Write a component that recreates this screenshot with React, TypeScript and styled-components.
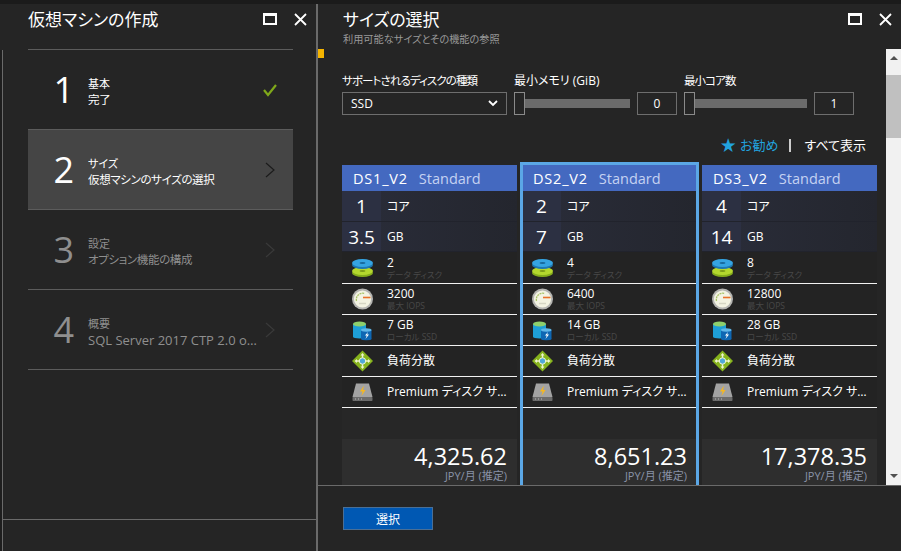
import React from "react";
import styled, { createGlobalStyle } from "styled-components";

const Global = createGlobalStyle`
  html, body { margin: 0; padding: 0; background: #252525; }
  body {
    font-family: "Open Sans", "Noto Sans CJK JP", sans-serif;
    font-feature-settings: "palt";
    color: #fff;
  }
  * { box-sizing: border-box; }
`;

const Page = styled.div`
  width: 901px;
  height: 551px;
  display: flex;
  flex-direction: column;
  overflow: hidden;
  background: #252525;
`;
const TopEdge = styled.div`
  height: 4px;
  flex: none;
  background: #1b1b1b;
`;
const Columns = styled.div`
  flex: 1;
  display: flex;
  min-height: 0;
`;
const LeftEdge = styled.div`
  width: 3px;
  flex: none;
  background: #1e1e1e;
  border-right: 1px solid #6a6a6a;
  margin-top: 46px;
`;
const Wizard = styled.section`
  width: 315px;
  flex: none;
  display: flex;
  flex-direction: column;
  border-right: 2px solid #6a6a6a;
`;
const WizardHead = styled.header`
  height: 45px;
  flex: none;
  padding: 3px 9px 0 25px;
  display: flex;
  justify-content: space-between;
  align-items: flex-start;
`;
const Title = styled.h1`
  margin: 0;
  font-size: 17px;
  line-height: 26px;
  font-weight: 400;
`;
const Controls = styled.div`
  display: flex;
  align-items: center;
  gap: 17px;
  height: 26px;
  margin-top: -1px;
`;
const MaxIcon = styled.span`
  width: 14px;
  height: 12px;
  border: 2px solid #fff;
  border-top-width: 3px;
`;
const StepList = styled.ol`
  list-style: none;
  margin: 0 23px 0 25px;
  padding: 0;
  flex: 1;
  border-top: 1px solid #5c5c5c;
`;
const Step = styled.li<{ $active?: boolean; $muted?: boolean }>`
  height: 80px;
  display: flex;
  align-items: center;
  padding: 0 12px 0 0;
  background: ${(p) => (p.$active ? "#454545" : "transparent")};
  border-bottom: 1px solid #5c5c5c;
  color: ${(p) => (p.$muted ? "#8f8f8f" : "#fff")};
`;
const StepNo = styled.span`
  width: 60px;
  flex: none;
  text-align: right;
  padding-right: 14px;
  font-size: 36px;
  line-height: 44px;
  font-weight: 400;
`;
const StepText = styled.div`
  flex: 1;
  min-width: 0;
  padding-top: 3px;
`;
const StepLabel = styled.div`
  font-size: 11px;
  line-height: 17px;
`;
const StepValue = styled.div<{ $latin?: boolean }>`
  font-size: ${(p) => (p.$latin ? "13px" : "11.5px")};
  letter-spacing: ${(p) => (p.$latin ? "0" : "-0.35px")};
  line-height: 16px;
  white-space: nowrap;
  overflow: hidden;
  text-overflow: ellipsis;
  width: 171px;
`;
const WizardFoot = styled.div`
  height: 32px;
  flex: none;
  border-top: 1px solid #6a6a6a;
`;
const StepMark = styled.svg`
  width: 16px;
  height: 16px;
  flex: none;
  margin-right: 3px;
`;
const Sizes = styled.section`
  flex: 1;
  min-width: 0;
  display: flex;
  flex-direction: column;
`;
const SizesHead = styled.header`
  height: 45px;
  flex: none;
  padding: 3px 9px 0 25px;
  display: flex;
  justify-content: space-between;
  align-items: flex-start;
  position: relative;
`;
const Subtitle = styled.div`
  font-size: 10.2px;
  line-height: 13px;
  color: #999;
`;
const Marker = styled.span`
  position: absolute;
  left: 0;
  top: 45px;
  width: 6px;
  height: 9px;
  background: #f5b400;
`;
const BodyRow = styled.div`
  height: 436px;
  flex: none;
  display: flex;
`;
const Scroller = styled.div`
  flex: 1;
  min-width: 0;
  padding: 23px 9px 0 24px;
  overflow: hidden;
`;
const Filters = styled.div`
  display: flex;
  gap: 7px;
  height: 42px;
`;
const Filter = styled.div<{ $w: number }>`
  width: ${(p) => p.$w}px;
  flex: none;
`;
const FilterLabel = styled.div<{ $tight?: boolean }>`
  font-size: ${(p) => (p.$tight ? "11.5px" : "12px")};
  letter-spacing: ${(p) => (p.$tight ? "-0.9px" : "0")};
  line-height: 18px;
  height: 20px;
  white-space: nowrap;
`;
const SelectBox = styled.div`
  height: 23px;
  border: 1px solid #6e6e6e;
  padding: 0 8px;
  display: flex;
  align-items: center;
  justify-content: space-between;
  font-size: 12px;
`;
const SliderRow = styled.div`
  display: flex;
  align-items: center;
  height: 23px;
`;
const Thumb = styled.span`
  width: 11px;
  height: 23px;
  flex: none;
  border: 1px solid #8a8a8a;
  background: #252525;
`;
const Track = styled.span`
  flex: 1;
  height: 9px;
  background: #6b6b6b;
`;
const NumberBox = styled.span`
  width: 40px;
  height: 23px;
  flex: none;
  margin-left: 7px;
  border: 1px solid #6e6e6e;
  display: flex;
  align-items: center;
  justify-content: center;
  font-size: 12px;
`;
const ViewLinks = styled.div`
  height: 48px;
  padding: 14px 11px 0 0;
  display: flex;
  justify-content: flex-end;
  align-items: center;
  font-size: 13px;
  line-height: 20px;
`;
const Recommend = styled.span`
  color: #22a3df;
  display: flex;
  align-items: center;
  gap: 4px;
`;
const Star = styled.span`
  font-size: 15.5px;
  line-height: 20px;
`;
const Divider = styled.span`
  width: 2px;
  height: 13px;
  background: #ccc;
  margin: 0 13px 0 11px;
`;
const Cards = styled.div`
  display: flex;
  gap: 5px;
  margin-top: 3px;
`;
const Card = styled.article`
  width: 175px;
  height: 320px;
  flex: none;
  position: relative;
  background: #232323;
  display: flex;
  flex-direction: column;
`;
const SelectedFrame = styled.span`
  position: absolute;
  left: -2px;
  right: -2px;
  top: -3px;
  bottom: 0;
  border: 3px solid #5ba7e6;
  border-bottom: none;
  pointer-events: none;
`;
const CardHead = styled.div`
  height: 26px;
  flex: none;
  background: #4469c0;
  padding-left: 11px;
  display: flex;
  align-items: center;
  gap: 11px;
  font-size: 14.5px;
`;
const SizeName = styled.span`
  letter-spacing: 0.8px;
`;
const Tier = styled.span`
  color: #c4d2f2;
`;
const SpecRow = styled.div<{ $h: number }>`
  height: ${(p) => p.$h}px;
  flex: none;
  display: flex;
  align-items: center;
  background: linear-gradient(90deg, #2a2d3a, #24262e);
  border-bottom: 1px solid #21232c;
  font-size: 12px;
`;
const SpecValue = styled.span`
  width: 39px;
  height: 100%;
  flex: none;
  background: #2c3042;
  display: flex;
  align-items: center;
  justify-content: center;
  font-size: 19px;
  margin-right: 6px;
`;
const Feature = styled.div<{ $h: number }>`
  height: ${(p) => p.$h}px;
  flex: none;
  display: flex;
  align-items: center;
  border-bottom: 1px solid #f2f2f2;
`;
const FeatureIcon = styled.svg`
  width: 22px;
  height: 22px;
  flex: none;
  margin: 0 13px 0 10px;
`;
const FeatureText = styled.div`
  flex: 1;
  min-width: 0;
  padding-right: 3px;
`;
const FeatureTitle = styled.div`
  font-size: 12px;
  line-height: 14px;
  white-space: nowrap;
  overflow: hidden;
  text-overflow: ellipsis;
`;
const FeatureSub = styled.div`
  font-size: 8.5px;
  line-height: 10px;
  color: #484848;
  white-space: nowrap;
`;
const Spacer = styled.div`
  height: 31px;
  flex: none;
  background: #272727;
`;
const PriceBox = styled.div`
  flex: 1;
  background: #2e2e2e;
  text-align: right;
  padding: 3px 10px 0 0;
`;
const Price = styled.div`
  font-size: 23.5px;
  line-height: 28px;
`;
const PriceUnit = styled.div`
  font-size: 11px;
  line-height: 11px;
  color: #8a93a8;
`;
const ScrollTrack = styled.div`
  width: 15px;
  flex: none;
  background: #f1f1f1;
  display: flex;
  flex-direction: column;
  align-items: center;
`;
const ScrollThumb = styled.div`
  width: 100%;
  height: 63px;
  background: #c0c0c0;
  margin-top: 15px;
`;
const ArrowUp = styled.span`
  margin-top: 7px;
  width: 0;
  height: 0;
  border-left: 4px solid transparent;
  border-right: 4px solid transparent;
  border-bottom: 4px solid #505050;
`;
const ArrowDown = styled.span`
  margin-top: auto;
  margin-bottom: 7px;
  width: 0;
  height: 0;
  border-left: 4px solid transparent;
  border-right: 4px solid transparent;
  border-top: 4px solid #505050;
`;
const Footer = styled.footer`
  flex: 1;
  border-top: 1px solid #6a6a6a;
  padding: 21px 0 0 25px;
`;
const SelectButton = styled.button`
  width: 90px;
  height: 23px;
  display: block;
  background: #0058b3;
  border: 1px solid #4a6f96;
  color: #fff;
  font: inherit;
  font-size: 12px;
  padding: 0;
`;

const Close = () => (
  <svg width="13" height="13" viewBox="0 0 13 13">
    <path d="M1 1l11 11M12 1L1 12" stroke="#fff" strokeWidth="1.8" fill="none" />
  </svg>
);
const Chevron = ({ color }: { color: string }) => (
  <StepMark viewBox="0 0 16 16">
    <path d="M4 1l8 7-8 7" stroke={color} strokeWidth="1.2" fill="none" />
  </StepMark>
);

const DiskIcon = () => (
  <FeatureIcon viewBox="0 0 22 22">
    <ellipse cx="10.5" cy="16" rx="10.5" ry="4" fill="#86ad1b" />
    <ellipse cx="10.5" cy="14" rx="10.5" ry="4" fill="#b4d82e" />
    <ellipse cx="10.5" cy="14" rx="3" ry="1.1" fill="#7c9c18" />
    <ellipse cx="10.5" cy="8" rx="10.5" ry="4" fill="#1c78b4" />
    <ellipse cx="10.5" cy="6" rx="10.5" ry="4" fill="#35a4e2" />
    <ellipse cx="10.5" cy="6" rx="3" ry="1.1" fill="#17689c" />
  </FeatureIcon>
);
const GaugeIcon = () => (
  <FeatureIcon viewBox="0 0 22 22">
    <circle cx="10.5" cy="11" r="10.5" fill="#b5b5b2" />
    <circle cx="10.5" cy="11" r="8.6" fill="#f3f3e2" />
    <path d="M4.5 13a6.3 6.3 0 0 1 8-7.5" stroke="#a9c468" strokeWidth="1.3" strokeDasharray="2 0.7" fill="none" />
    <path d="M11 9.5h7.5" stroke="#e8722a" strokeWidth="1.6" />
    <path d="M7 15.5h7" stroke="#d6d6c4" strokeWidth="1.5" />
  </FeatureIcon>
);
const SsdIcon = () => (
  <FeatureIcon viewBox="0 0 22 22">
    <rect x="1" y="5" width="13" height="13" fill="#1e9fd6" />
    <ellipse cx="7.5" cy="18" rx="6.5" ry="1.5" fill="#1e9fd6" />
    <ellipse cx="7.5" cy="5" rx="6.5" ry="2.5" fill="#8ed06c" />
    <rect x="9" y="11" width="10.5" height="9" fill="#0f67b3" />
    <ellipse cx="14.25" cy="20" rx="5.25" ry="1.2" fill="#0f67b3" />
    <ellipse cx="14.25" cy="11" rx="5.25" ry="1.7" fill="#5fb6e8" />
    <path d="M16 13l-3 3.5h1.8l-1.3 3.5 3.5-4.5h-1.9z" fill="#fff" />
  </FeatureIcon>
);
const BalanceIcon = () => (
  <FeatureIcon viewBox="0 0 22 22">
    <path d="M10.5 0.5l10.5 10.5-10.5 10.5L0 11z" fill="#86b31c" />
    <path
      d="M10.5 3l2 2.5h-1.3v4.8h4.8V9l2.5 2-2.5 2v-1.3h-4.8v4.8h1.3l-2 2.5-2-2.5h1.3v-4.8H5V13l-2.5-2L5 9v1.3h4.8V5.5H8.5z"
      fill="#eef5cf"
    />
    <circle cx="10.5" cy="11" r="3.2" fill="#4fa8d8" stroke="#eef5cf" />
  </FeatureIcon>
);
const PremiumIcon = () => (
  <FeatureIcon viewBox="0 0 22 22">
    <path d="M4 2.5h13l3.5 13.5H.5z" fill="#a3a3a3" />
    <rect x="0.5" y="16" width="20" height="4" rx="0.8" fill="#6c6c6c" />
    <path d="M3 18h1M6 18h1M9 18h1" stroke="#bdbdbd" />
    <path d="M12 4.5l-4 6h2.6l-1.2 4.5 4.2-6h-2.6z" fill="#f5b821" />
  </FeatureIcon>
);

type Size = { name: string; cores: string; mem: string; disks: string; iops: string; ssd: string; price: string; selected?: boolean };
const sizes: Size[] = [
  { name: "DS1_V2", cores: "1", mem: "3.5", disks: "2", iops: "3200", ssd: "7 GB", price: "4,325.62" },
  { name: "DS2_V2", cores: "2", mem: "7", disks: "4", iops: "6400", ssd: "14 GB", price: "8,651.23", selected: true },
  { name: "DS3_V2", cores: "4", mem: "14", disks: "8", iops: "12800", ssd: "28 GB", price: "17,378.35" },
];

const steps = [
  { no: "1", label: "基本", value: "完了", done: true },
  { no: "2", label: "サイズ", value: "仮想マシンのサイズの選択", active: true },
  { no: "3", label: "設定", value: "オプション機能の構成", muted: true },
  { no: "4", label: "概要", value: "SQL Server 2017 CTP 2.0 on Windows", muted: true, latin: true },
];

export default function App() {
  return (
    <Page>
      <Global />
      <TopEdge />
      <Columns>
        <LeftEdge />
        <Wizard>
          <WizardHead>
            <Title>仮想マシンの作成</Title>
            <Controls>
              <MaxIcon />
              <Close />
            </Controls>
          </WizardHead>
          <StepList>
            {steps.map((s) => (
              <Step key={s.no} $active={s.active} $muted={s.muted}>
                <StepNo>{s.no}</StepNo>
                <StepText>
                  <StepLabel>{s.label}</StepLabel>
                  <StepValue $latin={s.latin}>{s.value}</StepValue>
                </StepText>
                {s.done ? (
                  <StepMark viewBox="0 0 16 16">
                    <path d="M2 8l4 5 8-10" stroke="#7fa81a" strokeWidth="2.2" fill="none" />
                  </StepMark>
                ) : (
                  <Chevron color={s.active ? "#1c1c1c" : "#3a3a3a"} />
                )}
              </Step>
            ))}
          </StepList>
          <WizardFoot />
        </Wizard>
        <Sizes>
          <SizesHead>
            <div>
              <Title>サイズの選択</Title>
              <Subtitle>利用可能なサイズとその機能の参照</Subtitle>
            </div>
            <Controls>
              <MaxIcon />
              <Close />
            </Controls>
            <Marker />
          </SizesHead>
          <BodyRow>
            <Scroller>
              <Filters>
                <Filter $w={165}>
                  <FilterLabel $tight>サポートされるディスクの種類</FilterLabel>
                  <SelectBox>
                    SSD
                    <svg width="10" height="7" viewBox="0 0 10 7">
                      <path d="M1 1l4 4 4-4" stroke="#fff" strokeWidth="1.8" fill="none" />
                    </svg>
                  </SelectBox>
                </Filter>
                <Filter $w={163}>
                  <FilterLabel>最小メモリ (GiB)</FilterLabel>
                  <SliderRow>
                    <Thumb />
                    <Track />
                    <NumberBox>0</NumberBox>
                  </SliderRow>
                </Filter>
                <Filter $w={170}>
                  <FilterLabel $tight>最小コア数</FilterLabel>
                  <SliderRow>
                    <Thumb />
                    <Track />
                    <NumberBox>1</NumberBox>
                  </SliderRow>
                </Filter>
              </Filters>
              <ViewLinks>
                <Recommend>
                  <Star>★</Star>
                  <span>お勧め</span>
                </Recommend>
                <Divider />
                <span>すべて表示</span>
              </ViewLinks>
              <Cards>
                {sizes.map((s) => (
                  <Card key={s.name}>
                    <CardHead>
                      <SizeName>{s.name}</SizeName>
                      <Tier>Standard</Tier>
                    </CardHead>
                    <SpecRow $h={31}>
                      <SpecValue>{s.cores}</SpecValue>コア
                    </SpecRow>
                    <SpecRow $h={30}>
                      <SpecValue>{s.mem}</SpecValue>GB
                    </SpecRow>
                    <Feature $h={32}>
                      <DiskIcon />
                      <FeatureText>
                        <FeatureTitle>{s.disks}</FeatureTitle>
                        <FeatureSub>データ ディスク</FeatureSub>
                      </FeatureText>
                    </Feature>
                    <Feature $h={31}>
                      <GaugeIcon />
                      <FeatureText>
                        <FeatureTitle>{s.iops}</FeatureTitle>
                        <FeatureSub>最大 IOPS</FeatureSub>
                      </FeatureText>
                    </Feature>
                    <Feature $h={31}>
                      <SsdIcon />
                      <FeatureText>
                        <FeatureTitle>{s.ssd}</FeatureTitle>
                        <FeatureSub>ローカル SSD</FeatureSub>
                      </FeatureText>
                    </Feature>
                    <Feature $h={31}>
                      <BalanceIcon />
                      <FeatureText>
                        <FeatureTitle>負荷分散</FeatureTitle>
                      </FeatureText>
                    </Feature>
                    <Feature $h={31}>
                      <PremiumIcon />
                      <FeatureText>
                        <FeatureTitle>Premium ディスク サポート</FeatureTitle>
                      </FeatureText>
                    </Feature>
                    <Spacer />
                    <PriceBox>
                      <Price>{s.price}</Price>
                      <PriceUnit>JPY/月 (推定)</PriceUnit>
                    </PriceBox>
                    {s.selected && <SelectedFrame />}
                  </Card>
                ))}
              </Cards>
            </Scroller>
            <ScrollTrack>
              <ArrowUp />
              <ScrollThumb />
              <ArrowDown />
            </ScrollTrack>
          </BodyRow>
          <Footer>
            <SelectButton>選択</SelectButton>
          </Footer>
        </Sizes>
      </Columns>
    </Page>
  );
}
